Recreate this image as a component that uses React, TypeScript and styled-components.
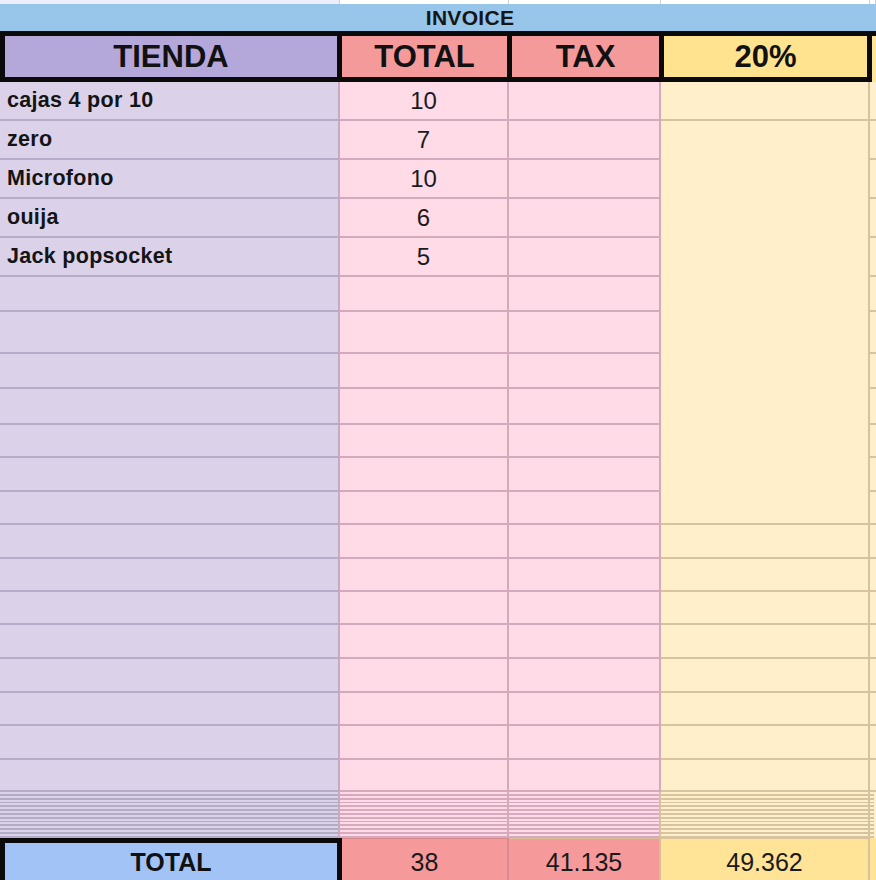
import React from "react";
import styled, { createGlobalStyle } from "styled-components";

const GlobalStyle = createGlobalStyle`
  html, body { margin: 0; padding: 0; background: #ffffff; }
  body { font-family: "Liberation Sans", Arial, sans-serif; overflow: hidden; color: #111; }
`;

const COLS = "340px 169px 152px 209px 1fr";

const Sheet = styled.div`
  width: 876px;
  height: 880px;
  overflow: hidden;
  display: flex;
  flex-direction: column;
`;

const TopStrip = styled.div`
  display: grid;
  grid-template-columns: ${COLS};
  height: 4px;
`;

const StripCell = styled.div<{ $tint?: boolean }>`
  background: ${(p) => (p.$tint ? "#eceefa" : "#ffffff")};
  border-right: 1px solid #cfcfd6;
`;

const TitleBar = styled.div`
  height: 27px;
  background: #97c6ea;
  padding-left: 64px;
  text-align: center;
  font-weight: 700;
  font-size: 21px;
  line-height: 27px;
  color: #151515;
  letter-spacing: 0.3px;
`;

const HeaderRow = styled.div`
  display: flex;
  height: 51px;
`;

const HeaderFrame = styled.div`
  display: flex;
  gap: 5px;
  padding: 5px;
  background: #0a0a0a;
`;

const HeaderCell = styled.div<{ $bg: string; $w: number }>`
  width: ${(p) => p.$w}px;
  background: ${(p) => p.$bg};
  display: flex;
  align-items: center;
  justify-content: center;
  font-weight: 700;
  font-size: 31px;
  color: #111;
`;

const HeaderEdge = styled.div`
  flex: 1;
  background: #ffe599;
  border-top: 5px solid #0a0a0a;
`;

const Body = styled.div<{ $rows: string }>`
  display: grid;
  grid-template-columns: ${COLS};
  grid-template-rows: ${(p) => p.$rows};
`;

const BaseCell = styled.div`
  box-sizing: border-box;
  border-right: 2px solid;
  border-bottom: 2px solid;
  display: flex;
  align-items: center;
`;

const NameCell = styled(BaseCell)`
  background: #dbd2ea;
  border-bottom-color: #b6abc8;
  border-right-color: #c4acc4;
  padding-left: 7px;
  font-weight: 700;
  font-size: 21.5px;
  color: #141414;
  letter-spacing: 0.3px;
`;

const PinkCell = styled(BaseCell)`
  background: #ffdae7;
  border-color: #d5a9bc;
  justify-content: center;
  font-size: 24px;
  color: #1a1a1a;
`;

const YellowCell = styled(BaseCell)<{ $span?: number }>`
  background: #fff0cb;
  border-color: #d7c39e;
  ${(p) => (p.$span ? `grid-row: span ${p.$span};` : "")}
`;

const EdgeCell = styled(BaseCell)`
  background: #fff0cb;
  border-right: none;
  border-bottom-color: #d7c39e;
`;

const Squeeze = styled.div<{ $fill: string; $line: string; $right: string }>`
  box-sizing: border-box;
  height: 46px;
  border-right: 2px solid ${(p) => p.$right};
  background: repeating-linear-gradient(
    to bottom,
    ${(p) => p.$fill} 0px,
    ${(p) => p.$fill} 2px,
    ${(p) => p.$line} 2px,
    ${(p) => p.$line} 3.8px
  );
`;

const SqueezeRow = styled.div`
  display: grid;
  grid-template-columns: ${COLS};
`;

const TotalRow = styled.div`
  display: grid;
  grid-template-columns: 342px 167px 152px 209px 1fr;
  height: 42px;
`;

const TotalLabel = styled.div`
  box-sizing: border-box;
  height: 48px;
  background: #a2c3f5;
  border: 5px solid #0a0a0a;
  border-bottom: none;
  display: flex;
  justify-content: center;
  padding-top: 5px;
  font-weight: 700;
  font-size: 25px;
  color: #111;
`;

const TotalValue = styled.div<{ $bg: string; $line: string }>`
  background: ${(p) => p.$bg};
  border-right: 2px solid ${(p) => p.$line};
  border-top: 1px solid ${(p) => p.$line};
  display: flex;
  justify-content: center;
  align-items: center;
  font-size: 25px;
  color: #1a1a1a;
`;

const items: { name: string; total: string }[] = [
  { name: "cajas 4 por 10", total: "10" },
  { name: "zero", total: "7" },
  { name: "Microfono", total: "10" },
  { name: "ouija", total: "6" },
  { name: "Jack popsocket", total: "5" },
];

const rowHeights = [39, 39, 39, 39, 39, 35, 42, 35, 36, 33, 34, 33, 34, 33, 33, 34, 34, 33, 34, 32];

export default function App() {
  const cells: React.ReactNode[] = [];
  rowHeights.forEach((_, i) => {
    const item = items[i];
    cells.push(<NameCell key={`n${i}`}>{item ? item.name : ""}</NameCell>);
    cells.push(<PinkCell key={`t${i}`}>{item ? item.total : ""}</PinkCell>);
    cells.push(<PinkCell key={`x${i}`} />);
    if (i === 0 || i >= 12) cells.push(<YellowCell key={`y${i}`} />);
    else if (i === 1) cells.push(<YellowCell key={`y${i}`} $span={11} />);
    cells.push(<EdgeCell key={`e${i}`} />);
  });

  return (
    <>
      <GlobalStyle />
      <Sheet>
        <TopStrip>
          <StripCell $tint />
          <StripCell />
          <StripCell />
          <StripCell />
          <StripCell />
        </TopStrip>
        <TitleBar>INVOICE</TitleBar>
        <HeaderRow>
          <HeaderFrame>
            <HeaderCell $bg="#b4a7da" $w={332}>TIENDA</HeaderCell>
            <HeaderCell $bg="#f59a9a" $w={165}>TOTAL</HeaderCell>
            <HeaderCell $bg="#f59a9a" $w={147}>TAX</HeaderCell>
            <HeaderCell $bg="#ffe38f" $w={203}>20%</HeaderCell>
          </HeaderFrame>
          <HeaderEdge />
        </HeaderRow>
        <Body $rows={rowHeights.map((h) => `${h}px`).join(" ")}>{cells}</Body>
        <SqueezeRow>
          <Squeeze $fill="#d9d2e9" $line="#b3acc6" $right="#c4acc4" />
          <Squeeze $fill="#ffdae7" $line="#d6a9bd" $right="#d5a9bc" />
          <Squeeze $fill="#ffdae7" $line="#d6a9bd" $right="#d7c0a4" />
          <Squeeze $fill="#fff0cb" $line="#d7c39e" $right="#d7c39e" />
          <Squeeze $fill="#fff0cb" $line="#d7c39e" $right="#fff0cb" />
        </SqueezeRow>
        <TotalRow>
          <TotalLabel>TOTAL</TotalLabel>
          <TotalValue $bg="#f5999a" $line="#d98a8e">38</TotalValue>
          <TotalValue $bg="#f5999a" $line="#d7bf9a">41.135</TotalValue>
          <TotalValue $bg="#ffe396" $line="#d7c39e">49.362</TotalValue>
          <TotalValue $bg="#ffe396" $line="#ffe396" />
        </TotalRow>
      </Sheet>
    </>
  );
}
